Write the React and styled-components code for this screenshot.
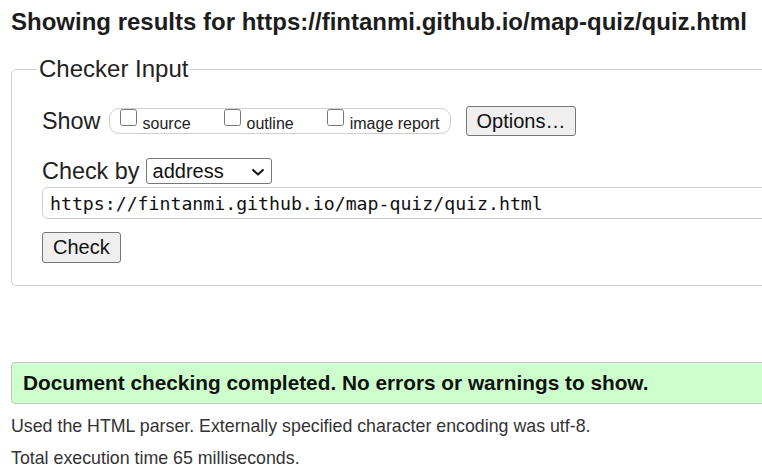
import React from "react";
import styled, { createGlobalStyle } from "styled-components";

const GlobalStyle = createGlobalStyle`
  html, body {
    margin: 0;
    padding: 0;
    background: #fff;
    overflow: hidden;
  }
  body {
    font-family: "Liberation Sans", Arial, sans-serif;
    color: #222;
  }
`;

const Page = styled.div`
  width: 1000px;
  padding: 8px 0 0 11px;
`;

const Heading = styled.h2`
  margin: 0;
  font-size: 24px;
  line-height: 28px;
  font-weight: bold;
  color: #1d1d1d;
  white-space: nowrap;
`;

const Fieldset = styled.fieldset`
  margin: 19px 0 0 0;
  padding: 22px 0 22px 30px;
  border: 1px solid #cfcfcf;
  border-radius: 5px;
  min-width: 0;
`;

const Legend = styled.legend`
  font-size: 24px;
  line-height: 28px;
  padding: 0 2px;
  margin-left: -5px;
  color: #222;
`;

const Row = styled.div`
  display: flex;
  align-items: center;
  height: ${(p) => p.$h || 32}px;
  margin-top: ${(p) => p.$mt || 0}px;
`;

const RowLabel = styled.span`
  font-size: 23.4px;
  color: #222;
  margin-right: ${(p) => p.$gap || 8}px;
`;

const Options = styled.span`
  display: inline-flex;
  align-items: center;
  height: 24px;
  border: 1px solid #d0d0d0;
  border-radius: 10px;
  padding: 0 10px 0 6px;
`;

const CheckLabel = styled.label`
  font-size: 16px;
  color: #222;
  margin-right: ${(p) => (p.$last ? 0 : 29)}px;
  white-space: nowrap;

  input {
    width: 17px;
    height: 17px;
    margin: 0 6px 3px 4px;
    vertical-align: 3px;
  }
`;

const Button = styled.button`
  font-family: "Liberation Sans", Arial, sans-serif;
  font-size: 20px;
  color: #111;
  background: #efefef;
  border: 1px solid #767676;
  border-radius: 3px;
  height: ${(p) => p.$h || 31}px;
  padding: 0 ${(p) => p.$px || 11}px;
  margin-left: ${(p) => p.$ml || 0}px;
  cursor: pointer;
`;

const SelectWrap = styled.span`
  position: relative;
  display: inline-block;
`;

const Select = styled.select`
  appearance: none;
  -webkit-appearance: none;
  font-family: "Liberation Sans", Arial, sans-serif;
  font-size: 20px;
  color: #111;
  background: #fff;
  border: 1px solid #767676;
  border-radius: 3px;
  width: 126px;
  height: 26px;
  padding: 0 0 0 6px;
  line-height: 24px;
`;

const Chevron = styled.svg`
  position: absolute;
  right: 7px;
  top: 10px;
  pointer-events: none;
`;

const UrlInput = styled.input`
  display: block;
  box-sizing: border-box;
  width: 900px;
  height: 32px;
  margin-top: 2px;
  padding: 0 0 0 7px;
  border: 1px solid #cdcdcd;
  border-radius: 6px;
  font-family: "DejaVu Sans Mono", "Liberation Mono", monospace;
  font-size: 18.2px;
  color: #111;
  outline: none;
`;

const Success = styled.div`
  margin-top: 76px;
  height: 40px;
  display: flex;
  align-items: center;
  padding-left: 11px;
  background: #ccffcc;
  border: 1px solid #c4c4c4;
  border-radius: 4px;
  font-size: 20.8px;
  font-weight: bold;
  color: #111;
  white-space: nowrap;
`;

const Note = styled.p`
  margin: 0;
  font-size: 17.8px;
  line-height: 32px;
  color: #333;
  white-space: nowrap;
  &:first-of-type {
    margin-top: 6px;
  }
`;

export default function App() {
  return (
    <>
      <GlobalStyle />
      <Page>
        <Heading>Showing results for https://fintanmi.github.io/map-quiz/quiz.html</Heading>

        <Fieldset>
          <Legend>Checker Input</Legend>

          <Row $h={32}>
            <RowLabel>Show</RowLabel>
            <Options>
              <CheckLabel>
                <input type="checkbox" />
                source
              </CheckLabel>
              <CheckLabel>
                <input type="checkbox" />
                outline
              </CheckLabel>
              <CheckLabel $last>
                <input type="checkbox" />
                image report
              </CheckLabel>
            </Options>
            <Button $h={30} $px={10} $ml={15}>Options…</Button>
          </Row>

          <Row $h={28} $mt={20}>
            <RowLabel $gap={6}>Check by</RowLabel>
            <SelectWrap>
              <Select defaultValue="address">
                <option value="address">address</option>
                <option value="upload">file upload</option>
                <option value="input">text input</option>
              </Select>
              <Chevron width="14" height="8" viewBox="0 0 14 8">
                <path d="M1.5 1.5 L7 6.5 L12.5 1.5" fill="none" stroke="#111" strokeWidth="2" />
              </Chevron>
            </SelectWrap>
          </Row>

          <UrlInput defaultValue="https://fintanmi.github.io/map-quiz/quiz.html" />

          <Row $h={31} $mt={13}>
            <Button $h={31} $px={10}>Check</Button>
          </Row>
        </Fieldset>

        <Success>Document checking completed. No errors or warnings to show.</Success>
        <Note>Used the HTML parser. Externally specified character encoding was utf-8.</Note>
        <Note>Total execution time 65 milliseconds.</Note>
      </Page>
    </>
  );
}
